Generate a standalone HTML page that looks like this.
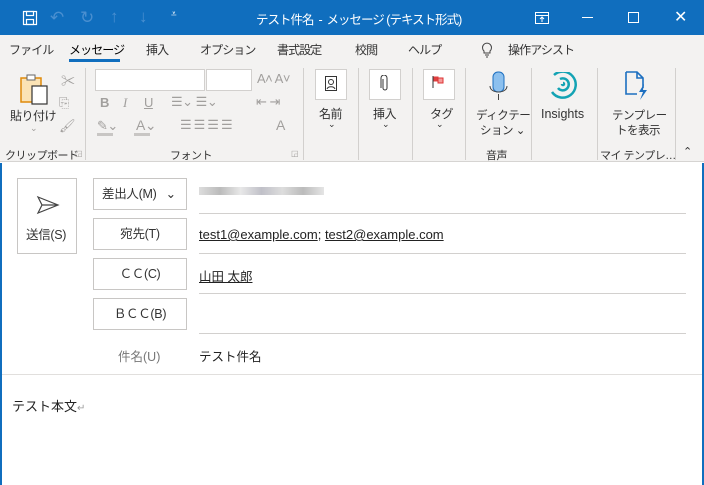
<!DOCTYPE html>
<html><head><meta charset="utf-8"><style>
*{margin:0;padding:0;box-sizing:border-box}
body{width:704px;height:485px;overflow:hidden;font-family:"Liberation Sans","Noto Sans CJK JP",sans-serif;font-size:12px;color:#333;background:#fff;position:relative}
.a{position:absolute;white-space:nowrap}
#title{left:0;top:0;width:704px;height:35px;background:#106ebe;color:#fff}
#tabs{left:0;top:35px;width:704px;height:28px;background:#f3f2f1}
#tabs span{font-size:12px;letter-spacing:-0.9px}
#rib{left:0;top:63px;width:704px;height:99px;background:#f3f2f1;border-bottom:1px solid #d6d4d2;letter-spacing:-0.5px}
.sep{position:absolute;top:5px;width:1px;height:92px;background:#d2d0ce}
.g{color:#a19f9d}
.btn{position:absolute;border:1px solid #c8c6c4;background:#fff;text-align:center;font-size:12.5px;color:#333;letter-spacing:-0.3px}
.ln{position:absolute;left:199px;width:487px;height:1px;background:#d2d0ce}
u{text-decoration:underline}
.lat{letter-spacing:0}
</style></head><body>
<div class="a" id="title">
 <svg class="a" style="left:22px;top:10px" width="16" height="16" viewBox="0 0 16 16" fill="none" stroke="#fff" stroke-width="1.2"><rect x="1.5" y="1.5" width="13" height="13"/><rect x="4.5" y="1.5" width="7" height="4"/><rect x="4.5" y="9.5" width="7" height="5"/></svg>
 <div class="a" style="left:50px;top:8px;color:#4a8fd0;font-size:17px">↶</div>
 <div class="a" style="left:80px;top:8px;color:#4a8fd0;font-size:17px">↻</div>
 <div class="a" style="left:110px;top:7px;color:#4a8fd0;font-size:17px">↑</div>
 <div class="a" style="left:139px;top:7px;color:#4a8fd0;font-size:17px">↓</div>
 <div class="a" style="left:171px;top:9px;font-size:10px">⩡</div>
 <div class="a" style="left:256px;top:9px;font-size:12.5px;letter-spacing:-1px">テスト件名 &nbsp;- &nbsp;メッセージ (テキスト形式)</div>
 <svg class="a" style="left:535px;top:12px" width="14" height="12" fill="none" stroke="#fff"><rect x="0.5" y="0.5" width="13" height="11"/><line x1="0" y1="3.5" x2="14" y2="3.5"/><path d="M7 10V5M5 7l2-2 2 2"/></svg>
 <div class="a" style="left:582px;top:17px;width:11px;height:1px;background:#fff"></div>
 <div class="a" style="left:628px;top:12px;width:11px;height:11px;border:1px solid #fff"></div>
 <div class="a" style="left:674px;top:7px;font-size:16px">✕</div>
</div>
<div class="a" id="tabs">
 <span class="a" style="left:9px;top:6px">ファイル</span>
 <span class="a" style="left:69px;top:6px;color:#000">メッセージ</span>
 <div class="a" style="left:69px;top:24px;width:51px;height:3px;background:#106ebe"></div>
 <span class="a" style="left:146px;top:6px">挿入</span>
 <span class="a" style="left:200px;top:6px">オプション</span>
 <span class="a" style="left:277px;top:6px">書式設定</span>
 <span class="a" style="left:355px;top:6px">校閲</span>
 <span class="a" style="left:408px;top:6px">ヘルプ</span>
 <svg class="a" style="left:481px;top:6px" width="12" height="17" fill="none" stroke="#444"><path d="M3 10a4.5 4.5 0 1 1 6 0v2H3z"/><path d="M4 14h4M5 16h2"/></svg>
 <span class="a" style="left:508px;top:6px">操作アシスト</span>
</div>
<div class="a" id="rib">
 <svg class="a" style="left:20px;top:10px" width="30" height="32"><rect x="1" y="5" width="20" height="24" fill="#fbe3b5" stroke="#e08a0a" stroke-width="1.5"/><rect x="7" y="2" width="8" height="5" fill="#fff" stroke="#666"/><rect x="12" y="13" width="15" height="18" fill="#fff" stroke="#333" stroke-width="1.2"/></svg>
 <span class="a" style="left:10px;top:44px;font-size:12px">貼り付け</span>
 <span class="a g" style="left:30px;top:60px;font-size:9px">⌄</span>
 <span class="a g" style="left:61px;top:8px;font-size:14px">✂</span>
 <span class="a g" style="left:59px;top:32px;font-size:13px">⎘</span>
 <span class="a g" style="left:59px;top:55px;font-size:13px">🖌</span>
 <span class="a" style="left:5px;top:84px;font-size:11px">クリップボード</span><span class="a g" style="left:75px;top:86px;font-size:8px">◲</span>
 <div class="sep" style="left:85px"></div>
 <div class="a" style="left:95px;top:6px;width:110px;height:22px;background:#fff;border:1px solid #d2d0ce"></div>
 <div class="a" style="left:206px;top:6px;width:46px;height:22px;background:#fff;border:1px solid #d2d0ce"></div>
 <span class="a g" style="left:257px;top:8px;font-size:13px">A˄ A˅</span>
 <span class="a g" style="left:100px;top:32px;font-size:13px;font-weight:bold">B</span>
 <span class="a g" style="left:123px;top:32px;font-size:13px;font-style:italic;font-family:'Liberation Serif'">I</span>
 <span class="a g" style="left:144px;top:32px;font-size:13px;text-decoration:underline">U</span>
 <span class="a g" style="left:171px;top:31px;font-size:13px">☰⌄ ☰⌄</span>
 <span class="a g" style="left:256px;top:31px;font-size:13px">⇤ ⇥</span>
 <span class="a g" style="left:97px;top:55px;font-size:13px">✎⌄</span>
 <div class="a" style="left:97px;top:70px;width:16px;height:3px;background:#c8c6c4"></div>
 <span class="a g" style="left:136px;top:54px;font-size:14px">A⌄</span>
 <div class="a" style="left:134px;top:70px;width:16px;height:3px;background:#c8c6c4"></div>
 <span class="a g" style="left:180px;top:54px;font-size:13px;letter-spacing:2px">☰☰☰☰</span>
 <span class="a g" style="left:276px;top:54px;font-size:14px">A</span>
 <span class="a" style="left:170px;top:84px;font-size:11px">フォント</span><span class="a g" style="left:291px;top:86px;font-size:8px">◲</span>
 <div class="sep" style="left:303px"></div>
 <div class="a" style="left:315px;top:6px;width:32px;height:31px;background:#fff;border:1px solid #d2d0ce"></div>
 <svg class="a" style="left:325px;top:13px" width="12" height="16" fill="none" stroke="#333"><rect x="0.5" y="0.5" width="11" height="14"/><circle cx="6" cy="6" r="2.5"/><path d="M2 13c1-3 7-3 8 0"/></svg>
 <span class="a" style="left:319px;top:42px;font-size:12px">名前</span><span class="a" style="left:328px;top:56px;font-size:9px">⌄</span>
 <div class="sep" style="left:358px"></div>
 <div class="a" style="left:369px;top:6px;width:32px;height:31px;background:#fff;border:1px solid #d2d0ce"></div>
 <svg class="a" style="left:380px;top:12px" width="10" height="18" fill="none" stroke="#333"><path d="M3 4v9a2 2 0 0 0 4 0V3a3 3 0 0 0-6 0v10"/></svg>
 <span class="a" style="left:373px;top:42px;font-size:12px">挿入</span><span class="a" style="left:382px;top:56px;font-size:9px">⌄</span>
 <div class="sep" style="left:412px"></div>
 <div class="a" style="left:423px;top:6px;width:32px;height:31px;background:#fff;border:1px solid #d2d0ce"></div>
 <svg class="a" style="left:432px;top:12px" width="14" height="14"><path d="M1 1v12" stroke="#333"/><rect x="1.5" y="1.5" width="5" height="5" fill="#e04040"/><rect x="6" y="3" width="5" height="5" fill="#f59a9a" stroke="#d33"/></svg>
 <span class="a" style="left:430px;top:42px;font-size:12px">タグ</span><span class="a" style="left:436px;top:56px;font-size:9px">⌄</span>
 <div class="sep" style="left:465px"></div>
 <svg class="a" style="left:488px;top:8px" width="22" height="32"><rect x="5" y="1" width="11" height="20" rx="5" fill="#8cc0ee" stroke="#1c6fc0"/><path d="M2 15c0 8 17 8 17 0M10.5 23v6" stroke="#444" fill="none"/></svg>
 <span class="a" style="left:476px;top:44px;font-size:11.5px">ディクテー</span>
 <span class="a" style="left:480px;top:59px;font-size:11.5px">ション ⌄</span>
 <span class="a" style="left:486px;top:84px;font-size:11px">音声</span>
 <div class="sep" style="left:531px"></div>
 <svg class="a" style="left:548px;top:9px" width="32" height="28" fill="none" stroke="#13a3b4" stroke-width="2.5"><path d="M4 20a13 13 0 1 0 2-17"/><path d="M10 16a6 6 0 1 0 2-9"/><path d="M14 12a1 1 0 1 0 1-1"/></svg>
 <span class="a lat" style="left:541px;top:44px;font-size:12.5px">Insights</span>
 <div class="sep" style="left:597px"></div>
 <svg class="a" style="left:624px;top:7px" width="26" height="32" fill="none" stroke="#1c6fc0" stroke-width="1.6"><path d="M2 2h11l6 6v10M2 2v22h11"/><path d="M13 2v6h6"/><path d="M20 14l-5 8h4l-3 8 7-10h-4z" fill="#1c6fc0" stroke="none"/></svg>
 <span class="a" style="left:612px;top:44px;font-size:11.5px">テンプレー</span>
 <span class="a" style="left:616px;top:59px;font-size:11.5px">トを表示</span>
 <span class="a" style="left:600px;top:84px;font-size:11px">マイ テンプレ…</span>
 <div class="sep" style="left:675px"></div>
 <span class="a" style="left:683px;top:82px;font-size:11px">⌃</span>
</div>
<div class="a" style="left:0;top:163px;width:2px;height:322px;background:#106ebe"></div>
<div class="a" style="left:702px;top:163px;width:2px;height:322px;background:#106ebe"></div>
<div class="btn" style="left:17px;top:178px;width:60px;height:76px">
 <svg style="position:absolute;left:18px;top:16px" width="24" height="20" fill="none" stroke="#444" stroke-width="1.2"><path d="M2 2l20 8-20 8 4-8zM6 10h16"/></svg>
 <span style="position:absolute;left:8px;top:45px;font-size:12.5px">送信(S)</span>
</div>
<div class="btn" style="left:93px;top:178px;width:94px;height:32px;line-height:30px;text-align:left;padding-left:8px">差出人(M) <span style="margin-left:6px">⌄</span></div>
<div class="a" style="left:199px;top:187px;width:125px;height:8px;background:linear-gradient(90deg,#ddd,#bbb,#e8e8e8,#c0c0c8,#ddd,#bbb,#e5e5e5)"></div>
<div class="ln" style="top:213px"></div>
<div class="btn" style="left:93px;top:218px;width:94px;height:32px;line-height:30px">宛先(T)</div>
<div class="a lat" style="left:199px;top:227px;font-size:13px;color:#222"><u>test1@example.com</u>; <u>test2@example.com</u></div>
<div class="ln" style="top:253px"></div>
<div class="btn" style="left:93px;top:258px;width:94px;height:32px;line-height:30px">ＣＣ(C)</div>
<div class="a" style="left:199px;top:266px;font-size:12.5px;color:#222"><u>山田 太郎</u></div>
<div class="ln" style="top:293px"></div>
<div class="btn" style="left:93px;top:298px;width:94px;height:32px;line-height:30px">ＢＣＣ(B)</div>
<div class="ln" style="top:333px"></div>
<div class="a" style="left:118px;top:346px;font-size:12.5px;color:#777">件名(U)</div>
<div class="a" style="left:199px;top:346px;font-size:12.5px;color:#222">テスト件名</div>
<div class="a" style="left:2px;top:374px;width:700px;height:1px;background:#e1dfdd"></div>
<div class="a" style="left:12px;top:396px;font-size:13px;color:#222">テスト本文<span style="color:#999;font-size:10px">↵</span></div>
</body></html>
